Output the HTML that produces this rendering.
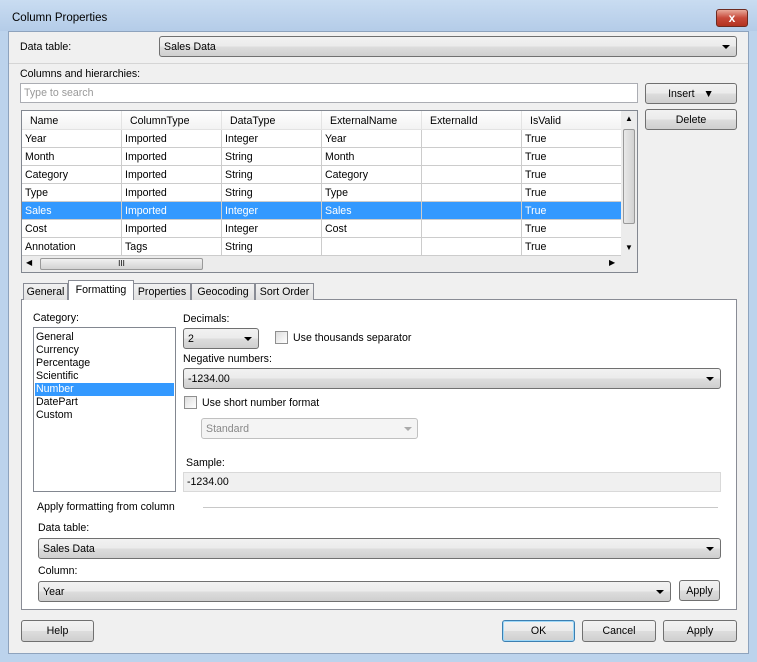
<!DOCTYPE html><html><head><style>
*{box-sizing:border-box;margin:0;padding:0}
body{width:757px;height:662px;font-family:"Liberation Sans",sans-serif;font-size:10.6px;color:#000;position:relative;overflow:hidden;background:#bcd3ec}
.a{position:absolute}
.btn{position:absolute;border:1px solid #707070;border-radius:3px;background:linear-gradient(#f2f2f2 0,#ebebeb 50%,#dddddd 51%,#cfcfcf);text-align:center;line-height:20px}
.combo{position:absolute;border:1px solid #707070;border-radius:3px;background:linear-gradient(#f2f2f2 0,#ebebeb 50%,#dddddd 51%,#cfcfcf);padding-left:4px;line-height:20px}
.combo:after{content:"";position:absolute;right:6px;top:8px;border-left:4px solid transparent;border-right:4px solid transparent;border-top:4px solid #000}
.cell{position:absolute;height:18px;line-height:19px;padding-left:3px;border-right:1px solid #ccc;border-bottom:1px solid #ccc;white-space:nowrap;overflow:hidden}
.cb{position:absolute;width:13px;height:13px;border:1px solid #8f8f8f;background:linear-gradient(135deg,#ddd,#fff)}
.tab{position:absolute;top:283px;height:17px;border:1px solid #898c95;border-bottom:none;background:linear-gradient(#f2f2f2,#e0e0e0);line-height:17px;text-align:center}
</style></head><body>
<div class="a" style="left:0;top:0;width:757px;height:31px;background:linear-gradient(#c9dcf1,#b4cce8)"></div>
<div class="a" style="left:12px;top:12px;font-size:11.5px">Column Properties</div>
<div class="a" style="left:716px;top:9px;width:32px;height:18px;border:1px solid #6d2a20;border-radius:3px;background:linear-gradient(#e9a99a,#c7493a 50%,#b2321f);color:#fff;font-weight:bold;text-align:center;line-height:16px;font-size:12px">x</div>
<div class="a" style="left:8px;top:31px;width:741px;height:623px;background:#f0f0f0;border:1px solid #8ea3bd"></div>
<div class="a" style="left:20px;top:41px">Data table:</div>
<div class="combo" style="left:159px;top:36px;width:578px;height:21px">Sales Data</div>
<div class="a" style="left:9px;top:63px;width:739px;height:1px;background:#d5d5d5"></div>
<div class="a" style="left:20px;top:68px">Columns and hierarchies:</div>
<div class="a" style="left:20px;top:83px;width:618px;height:20px;border:1px solid #abadb3;background:#fff;color:#999;padding-left:3px;line-height:19px">Type to search</div>
<div class="btn" style="left:645px;top:83px;width:92px;height:21px">Insert &nbsp; &#9660;</div>
<div class="btn" style="left:645px;top:109px;width:92px;height:21px">Delete</div>
<div class="a" style="left:21px;top:110px;width:617px;height:163px;border:1px solid #828790;background:#fff;overflow:hidden">
<div class="a" style="left:0;top:0;width:600px;height:19px;background:linear-gradient(#fff,#f3f3f3);border-bottom:1px solid #d5d5d5"></div>
<div id="t"></div>
<div class="a" style="left:599px;top:0;width:16px;height:145px;background:#ececec"></div>
<div class="a" style="left:601px;top:18px;width:12px;height:95px;background:linear-gradient(90deg,#e8e8e8,#d2d2d2);border:1px solid #999;border-radius:2px"></div>
<div class="a" style="left:0;top:145px;width:615px;height:16px;background:#ececec"></div>
<div class="a" style="left:18px;top:147px;width:163px;height:12px;background:linear-gradient(#f0f0f0,#d2d2d2);border:1px solid #999;border-radius:2px;text-align:center;font-size:8px;line-height:10px">III</div>
<div class="a" style="left:4px;top:147px;font-size:8px">&#9664;</div>
<div class="a" style="left:587px;top:147px;font-size:8px">&#9654;</div>
<div class="a" style="left:603px;top:3px;font-size:8px">&#9650;</div>
<div class="a" style="left:603px;top:132px;font-size:8px">&#9660;</div>
</div>
<div class="a" style="left:21px;top:299px;width:716px;height:311px;border:1px solid #898c95;background:#fff"></div>
<div class="tab" style="left:23px;width:45px">General</div>
<div class="tab" style="left:133px;width:58px">Properties</div>
<div class="tab" style="left:191px;width:64px">Geocoding</div>
<div class="tab" style="left:255px;width:59px">Sort Order</div>
<div class="tab" style="left:68px;top:280px;height:20px;width:66px;background:#fff;line-height:19px">Formatting</div>
<div class="a" style="left:33px;top:312px">Category:</div>
<div class="a" style="left:33px;top:327px;width:143px;height:165px;border:1px solid #828790;line-height:13px;padding:3px 2px">
<div>General</div><div>Currency</div><div>Percentage</div><div>Scientific</div><div style="background:#3399ff;color:#fff;margin:0 -1px;padding-left:1px">Number</div><div>DatePart</div><div>Custom</div></div>
<div class="a" style="left:183px;top:313px">Decimals:</div>
<div class="combo" style="left:183px;top:328px;width:76px;height:21px">2</div>
<div class="cb" style="left:275px;top:331px"></div>
<div class="a" style="left:293px;top:332px">Use thousands separator</div>
<div class="a" style="left:183px;top:353px">Negative numbers:</div>
<div class="combo" style="left:183px;top:368px;width:538px;height:21px">-1234.00</div>
<div class="cb" style="left:184px;top:396px"></div>
<div class="a" style="left:202px;top:397px">Use short number format</div>
<div class="a" style="left:201px;top:418px;width:217px;height:21px;border:1px solid #c0c0c0;border-radius:3px;background:#f4f4f4;color:#888;padding-left:4px;line-height:20px">Standard<span style="position:absolute;right:5px;top:8px;border-left:4px solid transparent;border-right:4px solid transparent;border-top:4px solid #aaa"></span></div>
<div class="a" style="left:186px;top:457px">Sample:</div>
<div class="a" style="left:183px;top:472px;width:538px;height:20px;border:1px solid #d9d9d9;background:#f0f0f0;padding-left:3px;line-height:19px">-1234.00</div>
<div class="a" style="left:37px;top:501px">Apply formatting from column</div>
<div class="a" style="left:203px;top:507px;width:515px;height:1px;background:#c8c8c8"></div>
<div class="a" style="left:38px;top:522px">Data table:</div>
<div class="combo" style="left:38px;top:538px;width:683px;height:21px">Sales Data</div>
<div class="a" style="left:38px;top:565px">Column:</div>
<div class="combo" style="left:38px;top:581px;width:633px;height:21px">Year</div>
<div class="btn" style="left:679px;top:580px;width:41px;height:21px">Apply</div>
<div class="btn" style="left:21px;top:620px;width:73px;height:22px">Help</div>
<div class="btn" style="left:502px;top:620px;width:73px;height:22px;border-color:#3c7fb1;box-shadow:inset 0 0 0 1px #9ed8f8">OK</div>
<div class="btn" style="left:582px;top:620px;width:74px;height:22px">Cancel</div>
<div class="btn" style="left:663px;top:620px;width:74px;height:22px">Apply</div>
<script>
var h=["Name","ColumnType","DataType","ExternalName","ExternalId","IsValid"];
var r=[["Year","Imported","Integer","Year","","True"],["Month","Imported","String","Month","","True"],["Category","Imported","String","Category","","True"],["Type","Imported","String","Type","","True"],["Sales","Imported","Integer","Sales","","True"],["Cost","Imported","Integer","Cost","","True"],["Annotation","Tags","String","","","True"]];
var s="";
for(var i=0;i<6;i++)s+='<div class="cell" style="left:'+(i*100)+'px;top:0;width:100px;height:19px;line-height:20px;padding-left:8px;border-color:#e3e3e3">'+h[i]+'</div>';
for(var j=0;j<7;j++){var sel=j==4;for(var i=0;i<6;i++)s+='<div class="cell" style="left:'+(i*100)+'px;top:'+(19+j*18)+'px;width:100px;'+(sel?'background:#3399ff;color:#fff;':'')+'">'+r[j][i]+'</div>';}
document.getElementById("t").outerHTML=s;
</script>
</body></html>
